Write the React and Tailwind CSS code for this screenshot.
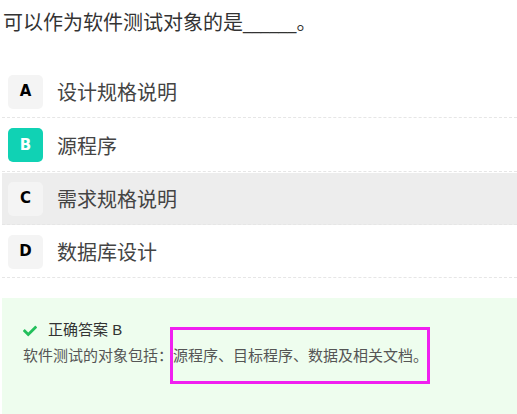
import React from "react";
import { FaCheck } from "react-icons/fa";

const options = [
  { k: "A", t: "设计规格说明", h: "h-[52px]" },
  { k: "B", t: "源程序", h: "h-[53px]", sel: true },
  { k: "C", t: "需求规格说明", h: "h-[52px]", hover: true },
  { k: "D", t: "数据库设计", h: "h-[52px]" },
];

export default function App() {
  return (
    <div
      className="relative w-[517px] h-[414px] overflow-hidden bg-white"
      style={{ fontFamily: '"Liberation Sans", "Noto Sans CJK SC", sans-serif' }}
    >
      <div className="pl-[3px] pt-[9px] h-[66px] text-[20px] leading-[28px] text-[#333]">
        可以作为软件测试对象的是
        <span className="text-[16px]">______</span>。
      </div>
      <div className="flex flex-col gap-[1px] pl-[2px]">
        {options.map((o) => (
          <div
            key={o.k}
            className={`${o.h} flex items-center pl-[6px] border-b border-dashed border-[#e6e6e6] ${
              o.hover ? "bg-[#ededed]" : ""
            }`}
          >
            <div
              className={`w-[35px] h-[34px] rounded-[5px] flex items-center justify-center text-[15px] font-bold ${
                o.sel ? "bg-[#10d2b4] text-white" : "bg-[#f4f4f4] text-black"
              }`}
              style={{ fontFamily: '"DejaVu Sans", sans-serif' }}
            >
              {o.k}
            </div>
            <div className="ml-[14px] pt-[3px] text-[20px] text-[#444]">{o.t}</div>
          </div>
        ))}
      </div>
      <div className="mt-[20px] ml-[2px] h-[120px] bg-[#eefdee] pl-[21px] pt-[20px]">
        <div className="flex items-center h-[25px] text-[15px] text-[#333]">
          <FaCheck className="text-[#22bf5b] w-[14px] h-[14px]" />
          <span className="ml-[11px]">正确答案 B</span>
        </div>
        <div className="text-[15px] leading-[25px] text-[#555]">
          软件测试的对象包括：源程序、目标程序、数据及相关文档。
        </div>
      </div>
      <div className="absolute left-[170px] top-[327px] w-[260px] h-[57px] border-[3px] border-[#f020f0]" />
    </div>
  );
}
